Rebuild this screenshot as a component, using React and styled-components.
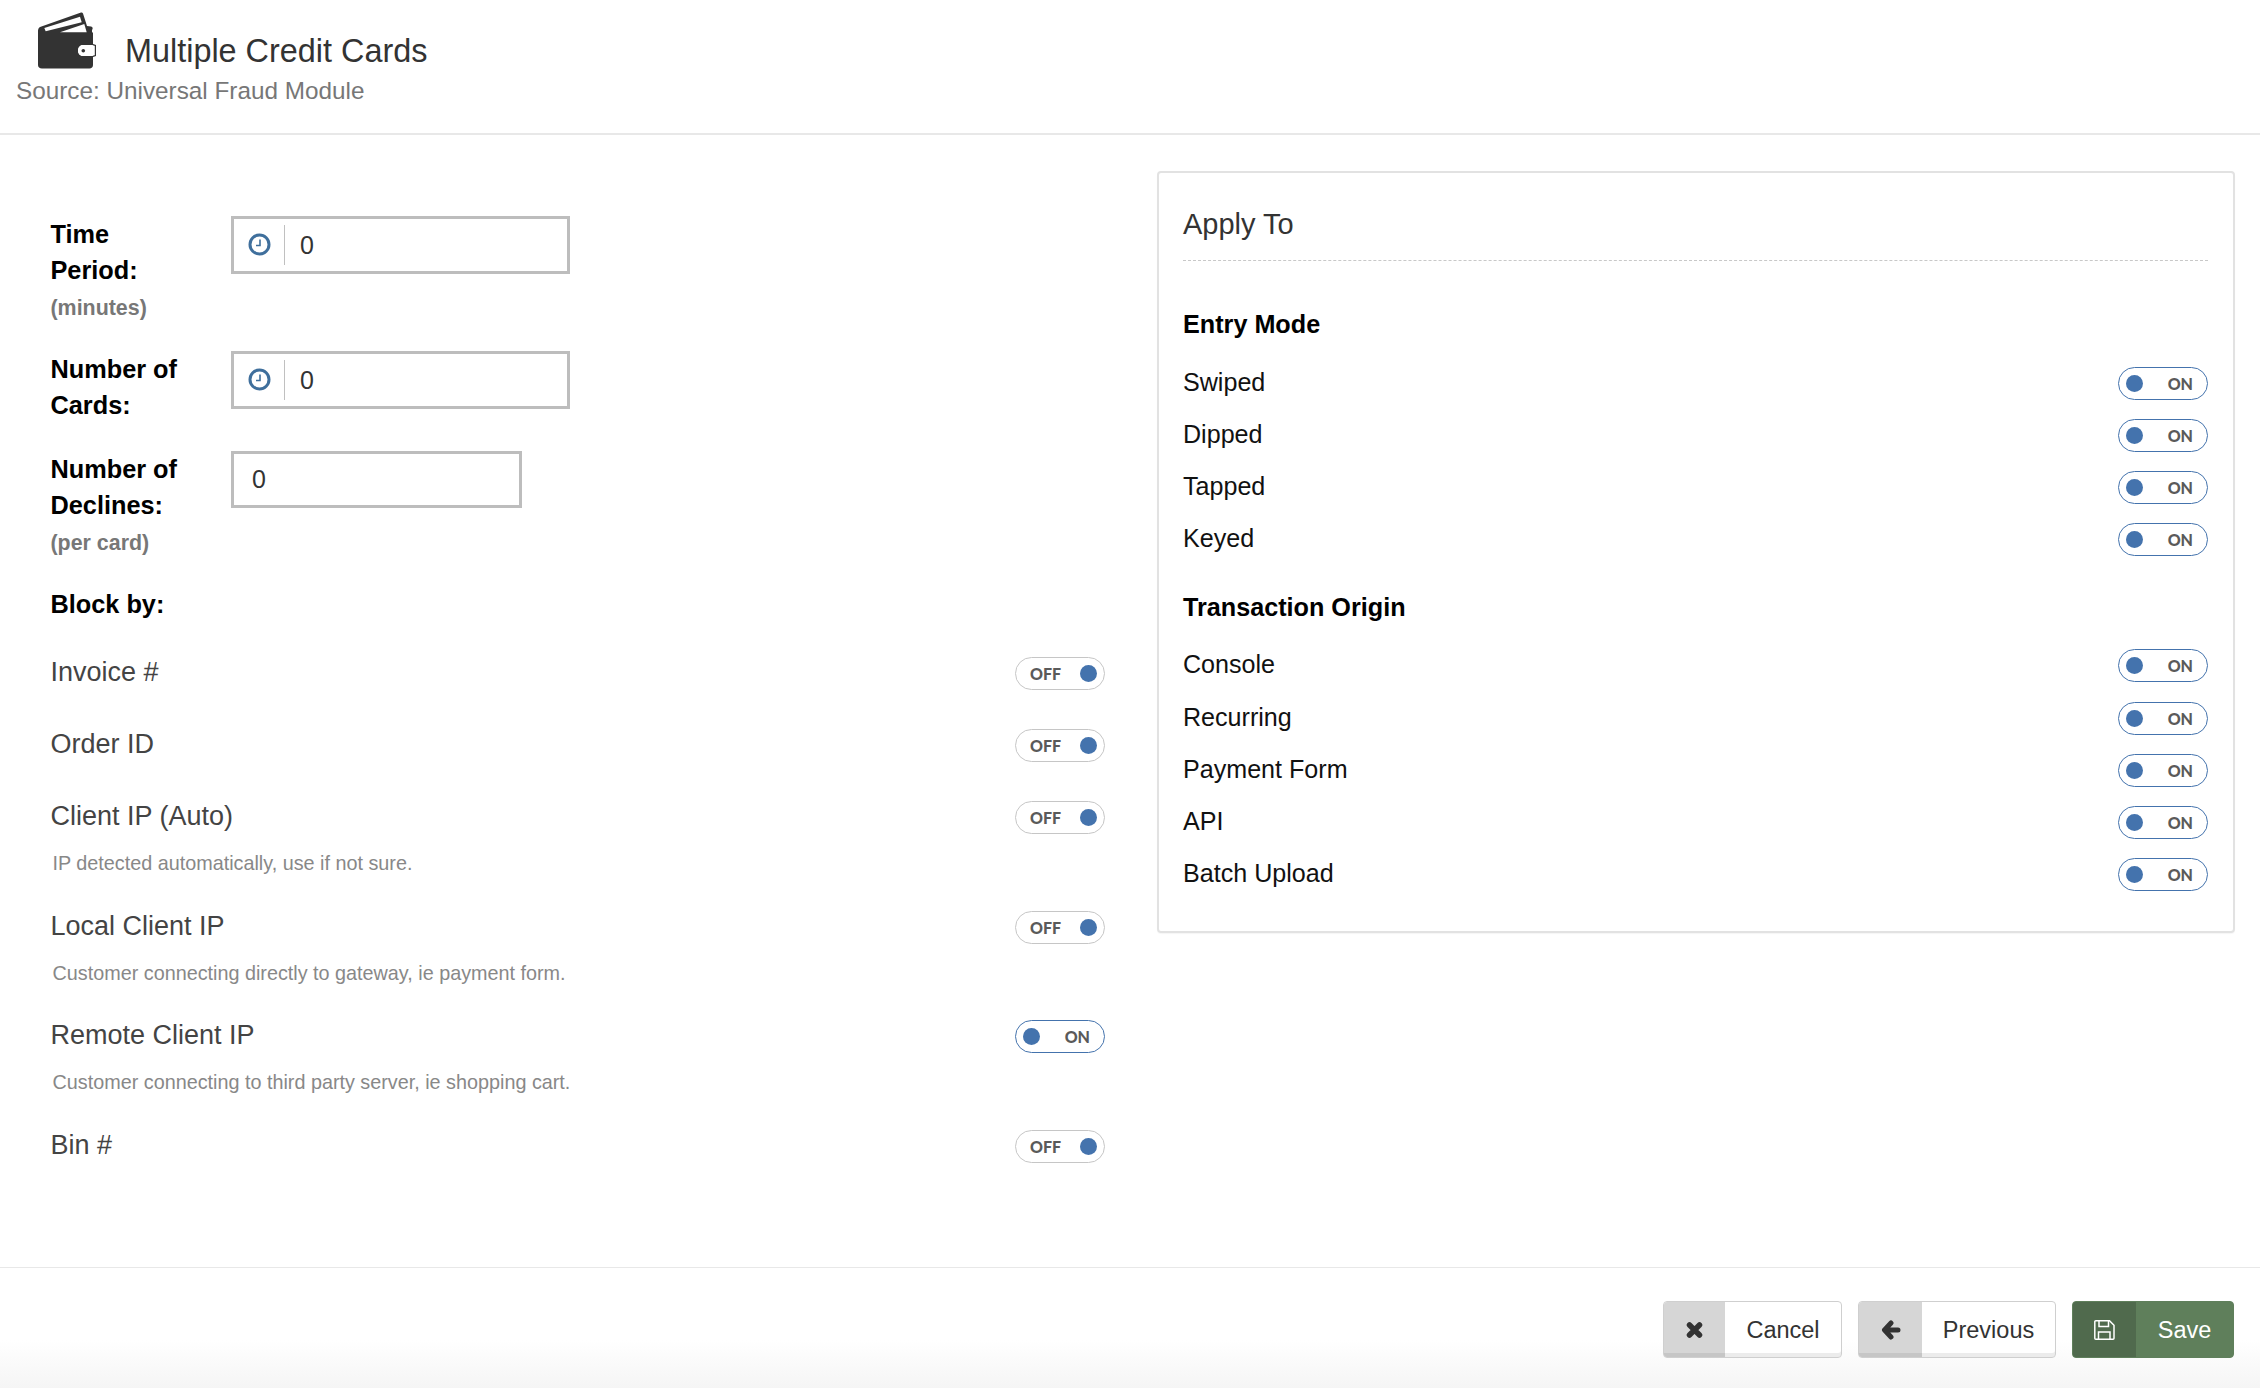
import React from "react";
import styled, { createGlobalStyle } from "styled-components";

const Global = createGlobalStyle`
  html, body { margin: 0; padding: 0; background: #fff; }
  body { font-family: "Liberation Sans", Arial, sans-serif; color: #333; }
`;

const Page = styled.div`
  width: 2260px;
  height: 1388px;
  display: flex;
  flex-direction: column;
  background: #fff;
`;

const Header = styled.header`
  height: 135px;
  flex: none;
  box-sizing: border-box;
  border-bottom: 2px solid #e8e8e8;
  padding: 13px 0 0 16px;
`;
const TitleRow = styled.div`
  display: flex;
  align-items: flex-end;
  gap: 28px;
  padding-left: 21px;
  height: 57px;
`;
const Title = styled.h1`
  margin: 0;
  font-size: 32.4px;
  line-height: 44px;
  font-weight: 400;
  color: #333;
  position: relative;
  top: 3px;
`;
const Source = styled.div`
  font-size: 24.3px;
  line-height: 30px;
  color: #777;
  margin-top: 6px;
`;

const Body = styled.main`
  flex: 1;
  display: grid;
  grid-template-columns: 1054.500px 1078px;
  column-gap: 52px;
  padding: 36px 25px 0 50.500px;
  align-items: start;
`;

const LeftCol = styled.section`
  display: flex;
  flex-direction: column;
  padding-top: 45px;
`;
const FieldRow = styled.div`
  display: grid;
  grid-template-columns: 180.500px auto;
  justify-content: start;
  height: ${(p) => p.$h}px;
`;
const FieldLabel = styled.label`
  font-size: 25.3px;
  line-height: 36px;
  font-weight: 700;
  color: #000;
  width: 140px;
  display: block;
`;
const Hint = styled.div`
  font-size: 21.4px;
  line-height: 40px;
  font-weight: 700;
  color: #777;
`;
const InputBox = styled.div`
  width: ${(p) => p.$w}px;
  height: ${(p) => p.$h}px;
  box-sizing: border-box;
  border: 3px solid #bdbdbd;
  display: flex;
  align-items: center;
  font-size: 25px;
  color: #333;
`;
const IconCell = styled.span`
  width: 51px;
  height: 40px;
  flex: none;
  box-sizing: border-box;
  border-right: 1px solid #c0c0c0;
  display: flex;
  align-items: center;
  justify-content: center;
  padding-bottom: 2px;
`;
const InputValue = styled.span`
  padding-left: ${(p) => p.$pad}px;
`;
const BlockTitle = styled.div`
  font-size: 25.3px;
  line-height: 36px;
  font-weight: 700;
  color: #000;
  height: 68px;
`;
const BlockRow = styled.div`
  display: flex;
  align-items: center;
  justify-content: space-between;
  height: 36px;
  font-size: 27px;
  color: #444;
`;
const BlockItem = styled.div`
  height: ${(p) => p.$h}px;
`;
const Help = styled.div`
  font-size: 19.8px;
  line-height: 28px;
  color: #888;
  margin: 15px 0 0 2px;
`;

const Toggle = styled.div`
  width: 90px;
  height: 33px;
  flex: none;
  box-sizing: border-box;
  margin-top: 2px;
  border: 1.5px solid ${(p) => (p.$on ? "#4473ad" : "#c6c6c6")};
  border-radius: 17px;
  display: flex;
  flex-direction: ${(p) => (p.$on ? "row" : "row-reverse")};
  align-items: center;
  justify-content: space-between;
  padding: ${(p) => (p.$on ? "0 14px 0 7px" : "0 7px 0 14px")};
  background: #fff;
`;
const Dot = styled.span`
  width: 17px;
  height: 17px;
  border-radius: 50%;
  background: #4473ad;
`;
const ToggleText = styled.span`
  font-family: Lato, sans-serif;
  font-weight: 900;
  font-size: 16px;
  color: #5a5a5a;
`;

const Card = styled.section`
  box-sizing: border-box;
  height: 762px;
  border: 2px solid #e2e2e2;
  border-radius: 4px;
  padding: 0 25px 0 24px;
  box-shadow: 0 1px 1px rgba(0, 0, 0, 0.04);
`;
const CardTitle = styled.h2`
  margin: 0;
  height: 88px;
  box-sizing: border-box;
  border-bottom: 1px dashed #c8c8c8;
  font-size: 29px;
  font-weight: 400;
  line-height: 36px;
  padding-top: 33px;
  color: #333;
`;
const GroupTitle = styled.h3`
  margin: 0;
  font-size: 25.2px;
  font-weight: 700;
  line-height: 36px;
  color: #000;
  padding: ${(p) => p.$top}px 0 14px;
`;
const OptionRow = styled.div`
  display: flex;
  align-items: center;
  justify-content: space-between;
  height: 52.2px;
  font-size: 25.1px;
  color: #111;
`;

const Footer = styled.footer`
  height: 121px;
  flex: none;
  box-sizing: border-box;
  border-top: 1px solid #e8e8e8;
  display: flex;
  justify-content: flex-end;
  gap: 16px;
  padding: 33px 26px 0 0;
  background: linear-gradient(to bottom, #fff 0, #fff 72px, #f5f5f5 100%);
`;
const Button = styled.button`
  width: ${(p) => p.$w}px;
  height: 57px;
  padding: 0;
  display: flex;
  align-items: stretch;
  font-family: inherit;
  font-size: 23.5px;
  border-radius: 4px;
  overflow: hidden;
  box-sizing: border-box;
  border: 1px solid ${(p) => (p.$primary ? "#5f7f5b" : "#cfcfcf")};
  background: ${(p) => (p.$primary ? "#5f7f5b" : "#fff")};
  color: ${(p) => (p.$primary ? "#fff" : "#333")};
  box-shadow: ${(p) => (p.$primary ? "none" : "inset 0 -4px 0 #ececec")};
`;
const ButtonIcon = styled.span`
  width: ${(p) => p.$w}px;
  flex: none;
  display: flex;
  align-items: center;
  justify-content: center;
  background: ${(p) => (p.$primary ? "#506a4d" : "#d6d6d6")};
  box-shadow: ${(p) => (p.$primary ? "none" : "inset 0 -4px 0 #c6c6c6")};
`;
const ButtonLabel = styled.span`
  display: flex;
  align-items: center;
  justify-content: center;
  flex: 1;
  padding-top: 2px;
`;

const Clock = () => (
  <svg width="23" height="23" viewBox="0 0 23 23" fill="none" stroke="#3f6f9c">
    <circle cx="11.5" cy="11.5" r="9.5" strokeWidth="3" />
    <path d="M12 6.500v6H8" strokeWidth="1.6" />
  </svg>
);

const CrossIcon = () => (
  <svg width="17" height="16" viewBox="0 0 17 16" fill="none" stroke="#333" strokeWidth="5.500" strokeLinecap="round">
    <path d="M3.500 3L13.500 13M13.500 3L3.500 13" />
  </svg>
);

const ArrowIcon = () => (
  <svg width="20" height="20" viewBox="0 0 20 20" fill="none" stroke="#333" strokeWidth="5" strokeLinecap="round" strokeLinejoin="round">
    <path d="M10 3L3.500 10L10 17M4 10H17" />
  </svg>
);

const SaveIcon = () => (
  <svg width="21" height="20" viewBox="0 0 21 20" fill="none" stroke="#fff" strokeWidth="1.5">
    <path d="M1.800 .8h13.700l4.500 4.500V18.200a1 1 0 0 1-1 1H1.800a1 1 0 0 1-1-1V1.800a1 1 0 0 1 1-1z" />
    <path d="M5 .8v5.700h9.500V.8" />
    <path d="M4.500 19.200v-7.200h11.500v7.200" />
  </svg>
);

const Wallet = () => (
  <svg width="60" height="58" viewBox="0 0 60 58">
    <path
      fill="#333"
      d="M3 15 L44 0.500 C45 0.200 45.500 0.500 46 1.500 L50 14 L54 14.500 C56 15 56 17 55 18 L55 20 C56 20.500 56 21 56 22 L56 33 L46 33 C43 33 41 35.500 41 38.500 C41 41.500 43 44 46 44 L56 44 L56 53 C56 55 54.500 56.500 52.500 56.500 L5 56.500 C2.500 56.500 1 55 1 53 L1 19 C1 17.500 1.500 16 3 15 Z"
    />
    <path fill="#fff" d="M7.300 16 L43 4.700 L44.700 10.300 L8.700 19.300 Z" />
    <path fill="#fff" d="M23 20.300 L47.300 12 L49.700 20.300 Z" />
    <path fill="#fff" d="M46 33 L57 33 L57 44 L46 44 C43 44 41 41.500 41 38.500 C41 35.500 43 33 46 33 Z" />
    <circle cx="46.300" cy="38.700" r="1.800" fill="#333" />
    <path fill="none" stroke="#333" strokeWidth="1.200" d="M56 32.600 L58.400 33.500 L58.400 43.500 L56 44.400" />
  </svg>
);

const Switch = ({ on }) => (
  <Toggle $on={on}>
    <Dot />
    <ToggleText>{on ? "ON" : "OFF"}</ToggleText>
  </Toggle>
);

const blockItems = [
  { label: "Invoice #", h: 72 },
  { label: "Order ID", h: 72 },
  { label: "Client IP (Auto)", h: 110, help: "IP detected automatically, use if not sure." },
  { label: "Local Client IP", h: 109, help: "Customer connecting directly to gateway, ie payment form." },
  { label: "Remote Client IP", h: 110, on: true, help: "Customer connecting to third party server, ie shopping cart." },
  { label: "Bin #", h: 36 },
];
const entryModes = ["Swiped", "Dipped", "Tapped", "Keyed"];
const origins = ["Console", "Recurring", "Payment Form", "API", "Batch Upload"];

export default function App() {
  return (
    <Page>
      <Global />
      <Header>
        <TitleRow>
          <Wallet />
          <Title>Multiple Credit Cards</Title>
        </TitleRow>
        <Source>Source: Universal Fraud Module</Source>
      </Header>
      <Body>
        <LeftCol>
          <FieldRow $h={135}>
            <div>
              <FieldLabel>Time Period:</FieldLabel>
              <Hint>(minutes)</Hint>
            </div>
            <InputBox $w={339} $h={58}>
              <IconCell><Clock /></IconCell>
              <InputValue $pad={15}>0</InputValue>
            </InputBox>
          </FieldRow>
          <FieldRow $h={100}>
            <FieldLabel>Number of Cards:</FieldLabel>
            <InputBox $w={339} $h={58}>
              <IconCell><Clock /></IconCell>
              <InputValue $pad={15}>0</InputValue>
            </InputBox>
          </FieldRow>
          <FieldRow $h={135}>
            <div>
              <FieldLabel>Number of Declines:</FieldLabel>
              <Hint>(per card)</Hint>
            </div>
            <InputBox $w={291} $h={57}>
              <InputValue $pad={18}>0</InputValue>
            </InputBox>
          </FieldRow>
          <BlockTitle>Block by:</BlockTitle>
          {blockItems.map((it) => (
            <BlockItem key={it.label} $h={it.h}>
              <BlockRow>
                {it.label}
                <Switch on={it.on} />
              </BlockRow>
              {it.help && <Help>{it.help}</Help>}
            </BlockItem>
          ))}
        </LeftCol>
        <Card>
          <CardTitle>Apply To</CardTitle>
          <GroupTitle $top={45}>Entry Mode</GroupTitle>
          {entryModes.map((m) => (
            <OptionRow key={m}>
              {m}
              <Switch on />
            </OptionRow>
          ))}
          <GroupTitle $top={24}>Transaction Origin</GroupTitle>
          {origins.map((m) => (
            <OptionRow key={m}>
              {m}
              <Switch on />
            </OptionRow>
          ))}
        </Card>
      </Body>
      <Footer>
        <Button $w={179}>
          <ButtonIcon $w={61}><CrossIcon /></ButtonIcon>
          <ButtonLabel>Cancel</ButtonLabel>
        </Button>
        <Button $w={198}>
          <ButtonIcon $w={63}><ArrowIcon /></ButtonIcon>
          <ButtonLabel>Previous</ButtonLabel>
        </Button>
        <Button $primary $w={162}>
          <ButtonIcon $primary $w={63}><SaveIcon /></ButtonIcon>
          <ButtonLabel>Save</ButtonLabel>
        </Button>
      </Footer>
    </Page>
  );
}
